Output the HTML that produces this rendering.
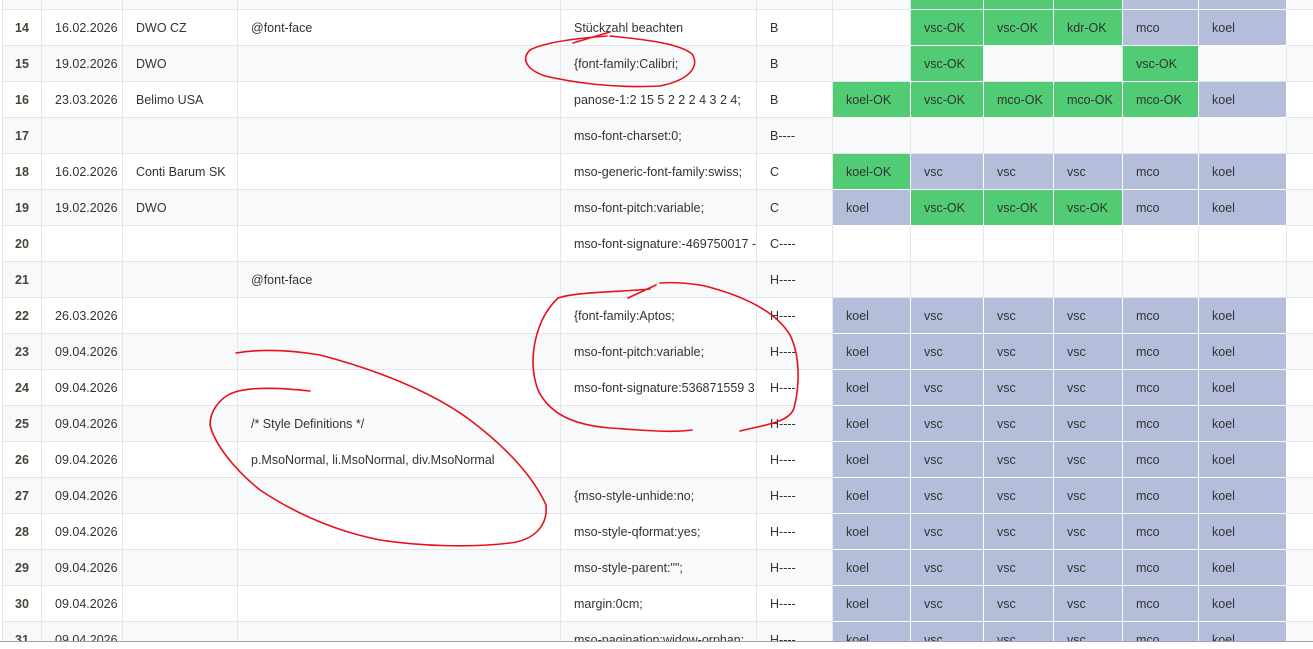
<!DOCTYPE html>
<html><head><meta charset="utf-8"><style>
html,body{margin:0;padding:0;background:#fff;width:1313px;height:649px;overflow:hidden;position:relative;font-family:"Liberation Sans",sans-serif;}
table{position:absolute;left:2px;top:-27px;width:1311px;border-collapse:collapse;table-layout:fixed;font-size:12.5px;color:#333;}
td{height:35px;border:1px solid #e3e5ea;padding:0 0 0 13px;white-space:nowrap;overflow:hidden;}
tr:nth-child(odd) td{background:#f8f9fb}
td.n{font-weight:bold;text-align:center;padding:0;color:#4a4238}
td.g{background:#51cc75 !important;border-color:#fff}
td.b{background:#b4bedb !important;border-color:#fff}
#cover{position:absolute;left:0;top:641px;width:1313px;height:8px;background:#fff;border-top:1.5px solid #9aa3b0}
svg{position:absolute;left:0;top:0}
</style></head><body>
<table>
<colgroup><col style="width:39px"><col style="width:81px"><col style="width:115px"><col style="width:323px"><col style="width:196px"><col style="width:76px"><col style="width:78px"><col style="width:73px"><col style="width:70px"><col style="width:69px"><col style="width:76px"><col style="width:88px"><col style="width:27px"></colgroup>
<tr><td class="n">13</td><td></td><td></td><td></td><td></td><td></td><td></td><td class="g"></td><td class="g"></td><td class="g"></td><td class="b"></td><td class="b"></td><td></td></tr>
<tr><td class="n">14</td><td>16.02.2026</td><td>DWO CZ</td><td>@font-face</td><td>Stückzahl beachten</td><td>B</td><td></td><td class="g">vsc-OK</td><td class="g">vsc-OK</td><td class="g">kdr-OK</td><td class="b">mco</td><td class="b">koel</td><td></td></tr>
<tr><td class="n">15</td><td>19.02.2026</td><td>DWO</td><td></td><td>{font-family:Calibri;</td><td>B</td><td></td><td class="g">vsc-OK</td><td></td><td></td><td class="g">vsc-OK</td><td></td><td></td></tr>
<tr><td class="n">16</td><td>23.03.2026</td><td>Belimo USA</td><td></td><td>panose-1:2 15 5 2 2 2 4 3 2 4;</td><td>B</td><td class="g">koel-OK</td><td class="g">vsc-OK</td><td class="g">mco-OK</td><td class="g">mco-OK</td><td class="g">mco-OK</td><td class="b">koel</td><td></td></tr>
<tr><td class="n">17</td><td></td><td></td><td></td><td>mso-font-charset:0;</td><td>B----</td><td></td><td></td><td></td><td></td><td></td><td></td><td></td></tr>
<tr><td class="n">18</td><td>16.02.2026</td><td>Conti Barum SK</td><td></td><td>mso-generic-font-family:swiss;</td><td>C</td><td class="g">koel-OK</td><td class="b">vsc</td><td class="b">vsc</td><td class="b">vsc</td><td class="b">mco</td><td class="b">koel</td><td></td></tr>
<tr><td class="n">19</td><td>19.02.2026</td><td>DWO</td><td></td><td>mso-font-pitch:variable;</td><td>C</td><td class="b">koel</td><td class="g">vsc-OK</td><td class="g">vsc-OK</td><td class="g">vsc-OK</td><td class="b">mco</td><td class="b">koel</td><td></td></tr>
<tr><td class="n">20</td><td></td><td></td><td></td><td>mso-font-signature:-469750017 -1</td><td>C----</td><td></td><td></td><td></td><td></td><td></td><td></td><td></td></tr>
<tr><td class="n">21</td><td></td><td></td><td>@font-face</td><td></td><td>H----</td><td></td><td></td><td></td><td></td><td></td><td></td><td></td></tr>
<tr><td class="n">22</td><td>26.03.2026</td><td></td><td></td><td>{font-family:Aptos;</td><td>H----</td><td class="b">koel</td><td class="b">vsc</td><td class="b">vsc</td><td class="b">vsc</td><td class="b">mco</td><td class="b">koel</td><td></td></tr>
<tr><td class="n">23</td><td>09.04.2026</td><td></td><td></td><td>mso-font-pitch:variable;</td><td>H----</td><td class="b">koel</td><td class="b">vsc</td><td class="b">vsc</td><td class="b">vsc</td><td class="b">mco</td><td class="b">koel</td><td></td></tr>
<tr><td class="n">24</td><td>09.04.2026</td><td></td><td></td><td>mso-font-signature:536871559 3</td><td>H----</td><td class="b">koel</td><td class="b">vsc</td><td class="b">vsc</td><td class="b">vsc</td><td class="b">mco</td><td class="b">koel</td><td></td></tr>
<tr><td class="n">25</td><td>09.04.2026</td><td></td><td>/* Style Definitions */</td><td></td><td>H----</td><td class="b">koel</td><td class="b">vsc</td><td class="b">vsc</td><td class="b">vsc</td><td class="b">mco</td><td class="b">koel</td><td></td></tr>
<tr><td class="n">26</td><td>09.04.2026</td><td></td><td>p.MsoNormal, li.MsoNormal, div.MsoNormal</td><td></td><td>H----</td><td class="b">koel</td><td class="b">vsc</td><td class="b">vsc</td><td class="b">vsc</td><td class="b">mco</td><td class="b">koel</td><td></td></tr>
<tr><td class="n">27</td><td>09.04.2026</td><td></td><td></td><td>{mso-style-unhide:no;</td><td>H----</td><td class="b">koel</td><td class="b">vsc</td><td class="b">vsc</td><td class="b">vsc</td><td class="b">mco</td><td class="b">koel</td><td></td></tr>
<tr><td class="n">28</td><td>09.04.2026</td><td></td><td></td><td>mso-style-qformat:yes;</td><td>H----</td><td class="b">koel</td><td class="b">vsc</td><td class="b">vsc</td><td class="b">vsc</td><td class="b">mco</td><td class="b">koel</td><td></td></tr>
<tr><td class="n">29</td><td>09.04.2026</td><td></td><td></td><td>mso-style-parent:"";</td><td>H----</td><td class="b">koel</td><td class="b">vsc</td><td class="b">vsc</td><td class="b">vsc</td><td class="b">mco</td><td class="b">koel</td><td></td></tr>
<tr><td class="n">30</td><td>09.04.2026</td><td></td><td></td><td>margin:0cm;</td><td>H----</td><td class="b">koel</td><td class="b">vsc</td><td class="b">vsc</td><td class="b">vsc</td><td class="b">mco</td><td class="b">koel</td><td></td></tr>
<tr><td class="n">31</td><td>09.04.2026</td><td></td><td></td><td>mso-pagination:widow-orphan;</td><td>H----</td><td class="b">koel</td><td class="b">vsc</td><td class="b">vsc</td><td class="b">vsc</td><td class="b">mco</td><td class="b">koel</td><td></td></tr>
</table>
<div id="cover"></div>
<svg width="1313" height="649" fill="none" stroke="#e8101a" stroke-width="1.6" stroke-linecap="round">
<path d="M573,43 L610,32"/>
<path d="M607,36 C580,38 545,42 530,50 C520,60 528,70 545,76 C580,84 620,88 660,86 C690,80 700,66 692,54 C680,44 650,40 610,36"/>
<path d="M656,285 L628,298"/>
<path d="M650,289 C620,292 575,292 558,298 C535,320 527,360 538,390 C550,415 575,425 610,428 C640,430 670,433 692,430"/>
<path d="M740,431 C765,425 790,422 794,408 C800,385 800,355 790,335 C775,310 740,295 705,286 C690,283 672,282 660,283"/>
<path d="M236,353 C260,349 290,350 320,355 C370,368 430,390 470,420 C510,450 535,480 546,505 C548,525 535,540 510,543 C470,548 420,546 380,540 C330,530 290,510 260,490 C235,470 215,445 210,425 C210,410 220,400 228,395 C240,388 265,386 310,391"/>
</svg>
</body></html>
